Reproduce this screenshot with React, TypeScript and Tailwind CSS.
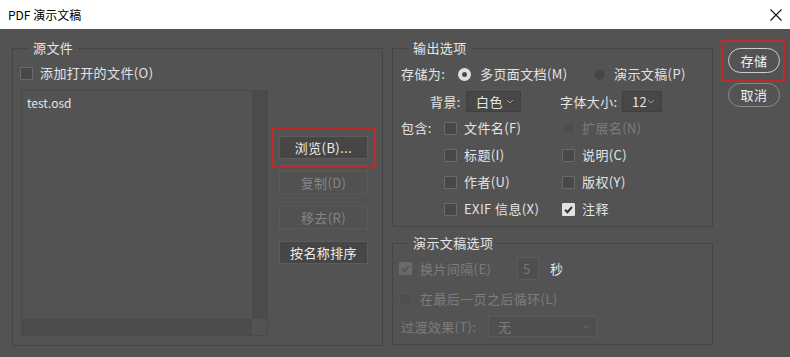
import React from "react";

const label = "text-[#e4e4e4]";
const dim = "text-[#7c7c7c]";

function Box({ checked = false, disabled = false }: { checked?: boolean; disabled?: boolean }) {
  const fill = checked
    ? disabled
      ? "bg-[#6a6a6a] border-[#6a6a6a]"
      : "bg-[#e2e2e2] border-[#e2e2e2]"
    : disabled
      ? "bg-[#4f4f4f] border-[#575757]"
      : "bg-[#484848] border-[#6a6a6a]";
  return (
    <span className={`w-[13px] h-[13px] shrink-0 border rounded-[1px] flex items-center justify-center ${fill}`}>
      {checked && (
        <svg width="11" height="11" viewBox="0 0 11 11">
          <path
            d="M2 5.8 L4.4 8.2 L9 3"
            fill="none"
            stroke={disabled ? "#555555" : "#333333"}
            strokeWidth="2"
          />
        </svg>
      )}
    </span>
  );
}

function Check({
  text,
  checked,
  disabled,
}: {
  text: string;
  checked?: boolean;
  disabled?: boolean;
}) {
  return (
    <div className="flex items-center gap-[7px] h-[18px]">
      <Box checked={checked} disabled={disabled} />
      <span className={disabled ? dim : label}>{text}</span>
    </div>
  );
}

function Radio({ on }: { on?: boolean }) {
  return on ? (
    <span className="w-[13px] h-[13px] rounded-full bg-[#e0e0e0] flex items-center justify-center shrink-0">
      <span className="w-[5px] h-[5px] rounded-full bg-[#4a4a4a]" />
    </span>
  ) : (
    <span className="w-[13px] h-[13px] rounded-full bg-[#474747] border border-[#5c5c5c] shrink-0" />
  );
}

function Chevron({ color = "#a0a0a0" }: { color?: string }) {
  return (
    <svg width="8" height="5" viewBox="0 0 8 5">
      <path d="M1 1 L4 4 L7 1" fill="none" stroke={color} strokeWidth="1" />
    </svg>
  );
}

function Select({ value, w, disabled }: { value: string; w: string; disabled?: boolean }) {
  return (
    <div
      className={`${w} h-[21px] flex items-center justify-between pl-[9px] pr-[6px] border ${
        disabled ? "bg-[#4f4f4f] border-[#5a5a5a]" : "bg-[#474747] border-[#404040]"
      }`}
    >
      <span className={disabled ? dim : label}>{value}</span>
      <Chevron color={disabled ? "#6a6a6a" : "#a0a0a0"} />
    </div>
  );
}

function Btn({ text, disabled }: { text: string; disabled?: boolean }) {
  return (
    <div
      className={`w-[89px] h-[23px] flex items-center justify-center border ${
        disabled
          ? "bg-[#515151] border-[#5a5a5a] text-[#858585]"
          : "bg-[#464646] border-[#5c5c5c] text-[#ececec]"
      }`}
    >
      {text}
    </div>
  );
}

function Legend({ text }: { text: string }) {
  return (
    <legend className="ml-[15px] px-[5px] text-[13px] leading-[16px] text-[#e6e6e6]">{text}</legend>
  );
}

export default function App() {
  return (
    <div className="w-[790px] h-[357px] overflow-hidden bg-[#535353] text-[13px] leading-[16px] tracking-[0.4px] font-['Noto_Sans_CJK_SC','Liberation_Sans',sans-serif]">
      {/* title bar */}
      <div className="h-[29px] bg-white flex items-center justify-between pl-[8px] pr-[8px]">
        <span className="text-black text-[12px] tracking-normal">PDF 演示文稿</span>
        <svg width="12" height="12" viewBox="0 0 12 12">
          <path d="M0.5 0.5 L11.5 11.5 M11.5 0.5 L0.5 11.5" stroke="#111" strokeWidth="1.1" />
        </svg>
      </div>

      <div className="flex pl-[12px] pt-[11px]">
        {/* source files */}
        <fieldset className="w-[371px] h-[306px] border border-[#454545]">
          <Legend text="源文件" />
          <div className="pl-[7px]">
            <div className="mt-[8px] flex items-center gap-[7px] h-[18px]">
              <Box />
              <span className={label}>添加打开的文件(O)</span>
            </div>
            <div className="mt-[8px] flex">
              <div className="ml-[1px] w-[247px] h-[246px] border border-[#4a4a4a] flex flex-col">
                <div className="flex flex-1">
                  <div className="flex-1 pl-[5px] pt-[4px] text-[12px] tracking-normal text-[#e4e4e4]">test.osd</div>
                  <div className="w-[15px] bg-[#4b4b4b]" />
                </div>
                <div className="flex h-[16px]">
                  <div className="flex-1 bg-[#4b4b4b]" />
                  <div className="w-[15px]" />
                </div>
              </div>
              <div className="ml-[11px] pt-[46px] flex flex-col gap-[12px]">
                <div className="relative">
                  <Btn text="浏览(B)..." />
                  <div className="absolute -left-[7px] -right-[8px] -top-[9px] -bottom-[8px] border-2 border-[#bf2b2b] pointer-events-none" />
                </div>
                <Btn text="复制(D)" disabled />
                <Btn text="移去(R)" disabled />
                <Btn text="按名称排序" />
              </div>
            </div>
          </div>
        </fieldset>

        <div className="ml-[9px] flex flex-col">
          {/* output options */}
          <fieldset className="w-[321px] h-[187px] border border-[#454545]">
            <Legend text="输出选项" />
            <div className="pl-[8px]">
              <div className="mt-[8px] h-[20px] flex items-center">
                <span className={`w-[57px] ${label}`}>存储为:</span>
                <div className="w-[135px] flex items-center gap-[9px]">
                  <Radio on />
                  <span className={label}>多页面文档(M)</span>
                </div>
                <div className="flex items-center gap-[8px]">
                  <Radio />
                  <span className={label}>演示文稿(P)</span>
                </div>
              </div>
              <div className="mt-[7px] h-[21px] flex items-center pl-[29px]">
                <span className={`w-[36px] ${label}`}>背景:</span>
                <Select value="白色" w="w-[55px]" />
                <span className={`ml-[39px] w-[62px] ${label}`}>字体大小:</span>
                <Select value="12" w="w-[40px]" />
              </div>
              <div className="mt-[7px] grid grid-cols-[43px_118px_1fr] gap-y-[9px]">
                <span className={`h-[18px] flex items-center ${label}`}>包含:</span>
                <Check text="文件名(F)" />
                <Check text="扩展名(N)" disabled />
                <span />
                <Check text="标题(I)" />
                <Check text="说明(C)" />
                <span />
                <Check text="作者(U)" />
                <Check text="版权(Y)" />
                <span />
                <Check text="EXIF 信息(X)" />
                <Check text="注释" checked />
              </div>
            </div>
          </fieldset>

          {/* presentation options */}
          <fieldset className="mt-[8px] w-[321px] h-[110px] border border-[#454545]">
            <Legend text="演示文稿选项" />
            <div className="pl-[6px]">
              <div className="mt-[6px] h-[23px] flex items-center">
                <Box checked disabled />
                <span className={`ml-[8px] w-[97px] ${dim}`}>换片间隔(E)</span>
                <div className="w-[22px] h-[23px] bg-[#4e4e4e] border border-[#5b5b5b] flex items-center pl-[5px] text-[#777]">
                  5
                </div>
                <span className={`ml-[11px] ${label}`}>秒</span>
              </div>
              <div className="mt-[10px] h-[18px] flex items-center">
                <Box disabled />
                <span className={`ml-[8px] ${dim}`}>在最后一页之后循环(L)</span>
              </div>
              <div className="mt-[8px] h-[21px] flex items-center pl-[2px]">
                <span className={`w-[87px] ${dim}`}>过渡效果(T):</span>
                <Select value="无" w="w-[109px]" disabled />
              </div>
            </div>
          </fieldset>
        </div>

        {/* dialog buttons */}
        <div className="ml-[15px] pt-[8px] flex flex-col">
          <div className="relative">
            <div className="w-[52px] h-[25px] rounded-full border-[1.5px] border-[#cfcfcf] flex items-center justify-center text-[#f0f0f0]">
              存储
            </div>
            <div className="absolute -left-[7px] -right-[5px] -top-[8px] -bottom-[9px] border-2 border-[#bf2b2b] pointer-events-none" />
          </div>
          <div className="mt-[10px] w-[52px] h-[24px] rounded-full border-[1.5px] border-[#8a8a8a] flex items-center justify-center text-[#f0f0f0]">
            取消
          </div>
        </div>
      </div>
    </div>
  );
}
